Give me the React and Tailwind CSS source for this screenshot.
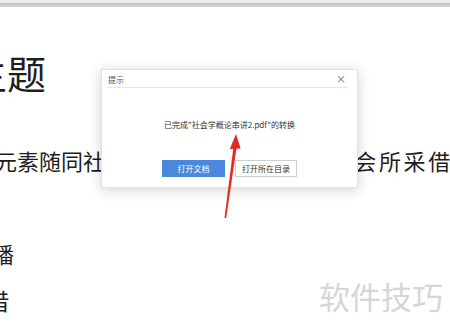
import React from 'react'

function Dialog() {
  return (
    <div className="absolute left-[101px] top-[69px] w-[257px] h-[119px] bg-white border border-[#e2e2e2] shadow-[0_2px_12px_rgba(0,0,0,0.18)] flex flex-col">
      <div className="ml-[5px] mr-[10px] h-[18px] border-b border-[#e6e6e6] flex items-center justify-between pl-[1px]">
        <span className="text-[8px] leading-none text-[#555] mt-[2px]">提示</span>
        <span className="text-[10px] leading-none text-[#666] mr-[1px]">×</span>
      </div>
      <p className="mt-[31px] text-center text-[8px] leading-[12px] text-[#333]">
        已完成"社会学概论串讲2.pdf"的转换
      </p>
      <div className="mt-[29px] flex justify-center gap-[10px]">
        <button className="w-[63px] h-[17px] bg-[#4a88dd] text-white text-[8px] leading-none">打开文档</button>
        <button className="w-[62px] h-[17px] bg-white border border-[#cfcfcf] text-[#333] text-[8px] leading-none">打开所在目录</button>
      </div>
    </div>
  )
}

export default function App() {
  return (
    <div className="relative w-[450px] h-[332px] overflow-hidden bg-white font-['Noto_Sans_CJK_SC',sans-serif]">
      <div className="h-[3px] bg-[#ededed]" />
      <div className="h-[4px] bg-gradient-to-b from-[#c2c2c2] to-[#d4d4d4]" />

      {/* document behind the dialog */}
      <div className="flex flex-col text-[#1e1e1e]">
        <div className="mt-[46px] ml-[-32px] text-[39px] leading-none whitespace-nowrap">主题</div>
        <div className="mt-[57px] flex justify-between text-[22px] leading-none whitespace-nowrap">
          <span className="ml-[-5px]">元素随同社会</span>
          <span className="mr-[-3px] tracking-[2.7px]">社会所采借</span>
        </div>
        <div className="mt-[71px] ml-[-30px] text-[22px] leading-none whitespace-nowrap">传播</div>
        <div className="mt-[25px] ml-[-37px] text-[23px] leading-none whitespace-nowrap">采借</div>
      </div>

      <Dialog />

      {/* red arrow */}
      <svg className="absolute left-0 top-0" width="450" height="332" viewBox="0 0 450 332">
        <polygon points="224.5,218 226.2,218 236.8,146 233.6,146" fill="#e02b24" />
        <polygon points="229.8,149 236,134 240.6,148.5" fill="#e02b24" />
      </svg>

      <div className="absolute left-[319px] top-[280px] text-[31px] leading-none text-[#d6d6d6] whitespace-nowrap">软件技巧</div>
    </div>
  )
}
